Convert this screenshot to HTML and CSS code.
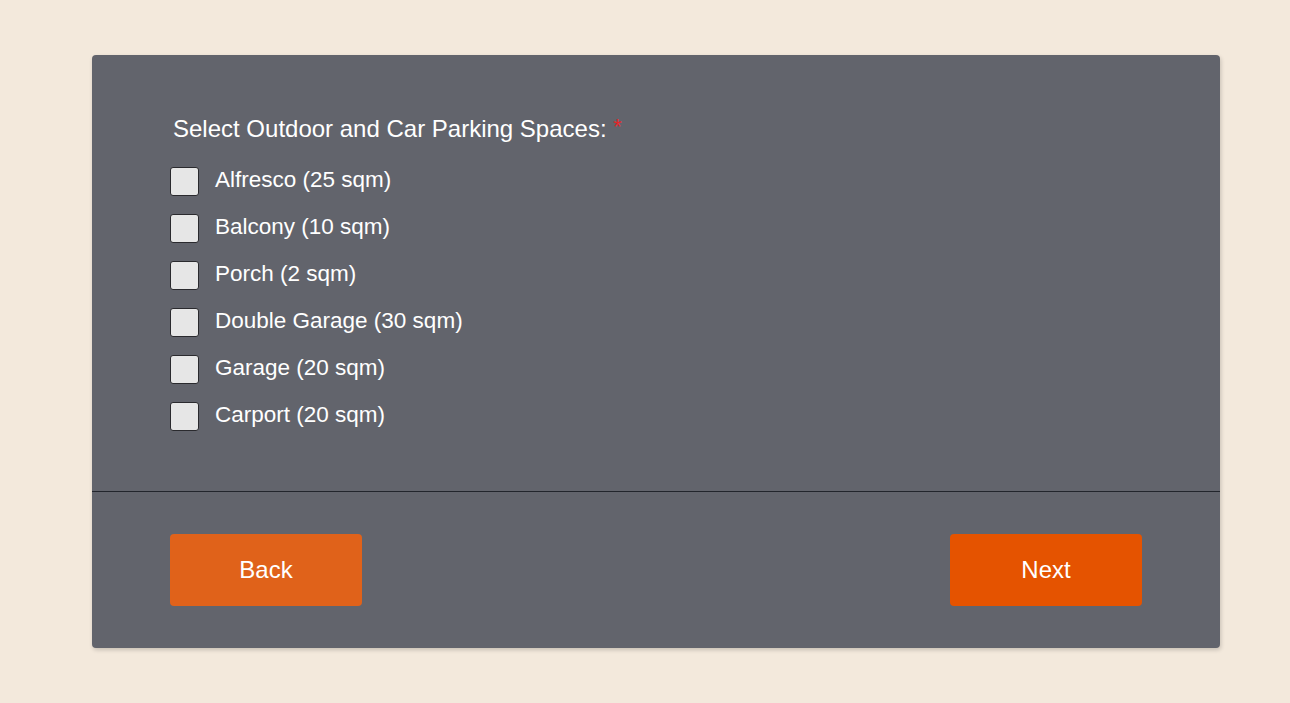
FILE: index.html
```html
<!DOCTYPE html>
<html>
<head>
<meta charset="utf-8">
<link rel="stylesheet" href="styles.css">
</head>
<body>
<div class="card">
  <div class="form-body">
    <div class="question">Select Outdoor and Car Parking Spaces: <span class="req">*</span></div>
    <ul class="options">
      <li class="option"><span class="box"></span><span class="opt-label">Alfresco (25 sqm)</span></li>
      <li class="option"><span class="box"></span><span class="opt-label">Balcony (10 sqm)</span></li>
      <li class="option"><span class="box"></span><span class="opt-label">Porch (2 sqm)</span></li>
      <li class="option"><span class="box"></span><span class="opt-label">Double Garage (30 sqm)</span></li>
      <li class="option"><span class="box"></span><span class="opt-label">Garage (20 sqm)</span></li>
      <li class="option"><span class="box"></span><span class="opt-label">Carport (20 sqm)</span></li>
    </ul>
  </div>
  <div class="form-footer">
    <button class="btn btn-back">Back</button>
    <button class="btn btn-next">Next</button>
  </div>
</div>
</body>
</html>
```

FILE: styles.css
```css
html, body {
  margin: 0;
  padding: 0;
}
body {
  background: #f3e9dc;
  font-family: "Liberation Sans", Arial, sans-serif;
  width: 1290px;
  height: 703px;
  overflow: hidden;
}
.card {
  margin: 55px 0 0 92px;
  width: 1128px;
  height: 593px;
  background: #62646c;
  border-radius: 4px;
  box-shadow: 1px 2px 4px rgba(0, 0, 0, 0.18);
  display: flex;
  flex-direction: column;
  box-sizing: border-box;
}
.form-body {
  height: 437px;
  flex: none;
  box-sizing: border-box;
  padding: 60px 78px 0 78px;
  border-bottom: 1px solid #22252c;
}
.question {
  color: #ffffff;
  font-size: 24px;
  line-height: 28px;
  padding-left: 3px;
  margin-bottom: 23px;
}
.req {
  color: #e3262a;
  font-size: 22px;
  position: relative;
  top: -3px;
}
.options {
  list-style: none;
  margin: 0;
  padding: 0;
  display: flex;
  flex-direction: column;
  gap: 18px;
}
.option {
  display: flex;
  align-items: center;
  gap: 16px;
  height: 29px;
}
.box {
  width: 29px;
  height: 29px;
  box-sizing: border-box;
  background: #e6e6e6;
  border: 1px solid #2a2a2e;
  border-radius: 3px;
  flex: none;
}
.opt-label {
  color: #ffffff;
  font-size: 22.5px;
  line-height: 26px;
  position: relative;
  top: -2px;
}
.form-footer {
  flex: 1;
  display: flex;
  justify-content: space-between;
  align-items: flex-start;
  padding: 42px 78px 0 78px;
}
.btn {
  width: 192px;
  height: 72px;
  border: none;
  border-radius: 4px;
  color: #ffffff;
  font-family: "Liberation Sans", Arial, sans-serif;
  font-size: 24px;
  cursor: pointer;
}
.btn-back {
  background: #e0621a;
}
.btn-next {
  background: #e55300;
}
```
